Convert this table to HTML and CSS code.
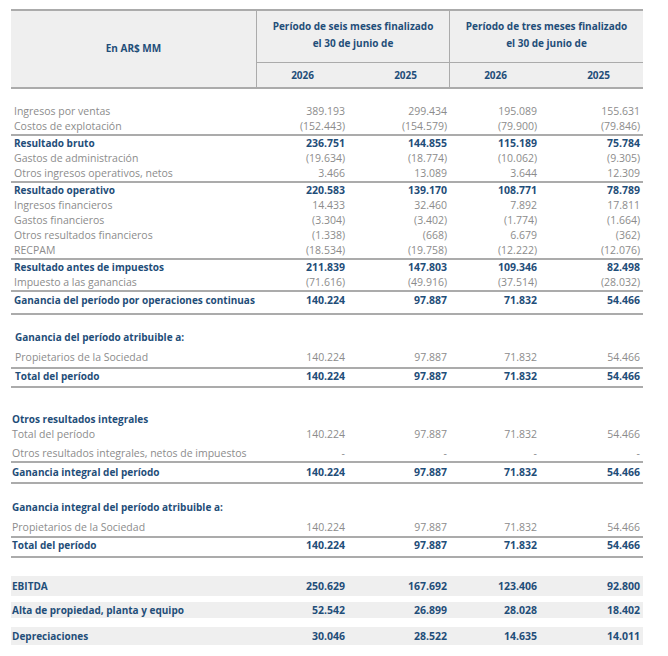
FILE: index.html
```html
<!DOCTYPE html>
<html lang="es">
<head>
<meta charset="utf-8">
<link rel="stylesheet" href="styles.css">
</head>
<body>
<div class="sheet">
  <div class="head">
    <div class="head-label">En AR$ MM</div>
    <div class="period p1">Período de seis meses finalizado<br>el 30 de junio de</div>
    <div class="period">Período de tres meses finalizado<br>el 30 de junio de</div>
    <div class="years p1"><span>2026</span><span>2025</span></div>
    <div class="years"><span>2026</span><span>2025</span></div>
  </div>

  <div class="sec s1">
    <div class="row"><span>Ingresos por ventas</span><span>389.193</span><span>299.434</span><span>195.089</span><span>155.631</span></div>
    <div class="row line"><span>Costos de explotación</span><span>(152.443)</span><span>(154.579)</span><span>(79.900)</span><span>(79.846)</span></div>
    <div class="row b"><span>Resultado bruto</span><span>236.751</span><span>144.855</span><span>115.189</span><span>75.784</span></div>
    <div class="row"><span>Gastos de administración</span><span>(19.634)</span><span>(18.774)</span><span>(10.062)</span><span>(9.305)</span></div>
    <div class="row line"><span>Otros ingresos operativos, netos</span><span>3.466</span><span>13.089</span><span>3.644</span><span>12.309</span></div>
    <div class="row b"><span>Resultado operativo</span><span>220.583</span><span>139.170</span><span>108.771</span><span>78.789</span></div>
    <div class="row"><span>Ingresos financieros</span><span>14.433</span><span>32.460</span><span>7.892</span><span>17.811</span></div>
    <div class="row"><span>Gastos financieros</span><span>(3.304)</span><span>(3.402)</span><span>(1.774)</span><span>(1.664)</span></div>
    <div class="row"><span>Otros resultados financieros</span><span>(1.338)</span><span>(668)</span><span>6.679</span><span>(362)</span></div>
    <div class="row line"><span>RECPAM</span><span>(18.534)</span><span>(19.758)</span><span>(12.222)</span><span>(12.076)</span></div>
    <div class="row b"><span>Resultado antes de impuestos</span><span>211.839</span><span>147.803</span><span>109.346</span><span>82.498</span></div>
    <div class="row line"><span>Impuesto a las ganancias</span><span>(71.616)</span><span>(49.916)</span><span>(37.514)</span><span>(28.032)</span></div>
    <div class="row b line gan"><span>Ganancia del período por operaciones continuas</span><span>140.224</span><span>97.887</span><span>71.832</span><span>54.466</span></div>
  </div>

  <div class="sec s2">
    <div class="title pb5">Ganancia del período atribuible a:</div>
    <div class="row line pb2"><span>Propietarios de la Sociedad</span><span>140.224</span><span>97.887</span><span>71.832</span><span>54.466</span></div>
    <div class="row b line pb2"><span>Total del período</span><span>140.224</span><span>97.887</span><span>71.832</span><span>54.466</span></div>
  </div>

  <div class="sec s3">
    <div class="title">Otros resultados integrales</div>
    <div class="row"><span>Total del período</span><span>140.224</span><span>97.887</span><span>71.832</span><span>54.466</span></div>
    <div class="row line pt4"><span>Otros resultados integrales, netos de impuestos</span><span>-</span><span>-</span><span>-</span><span>-</span></div>
    <div class="row b line pt2 pb2"><span>Ganancia integral del período</span><span>140.224</span><span>97.887</span><span>71.832</span><span>54.466</span></div>
  </div>

  <div class="sec s4">
    <div class="title">Ganancia integral del período atribuible a:</div>
    <div class="row line pt5 pb1"><span>Propietarios de la Sociedad</span><span>140.224</span><span>97.887</span><span>71.832</span><span>54.466</span></div>
    <div class="row b line pb3"><span>Total del período</span><span>140.224</span><span>97.887</span><span>71.832</span><span>54.466</span></div>
  </div>

  <div class="sec s5">
    <div class="row b band h20"><span>EBITDA</span><span>250.629</span><span>167.692</span><span>123.406</span><span>92.800</span></div>
    <div class="row b band h16 mt6"><span>Alta de propiedad, planta y equipo</span><span>52.542</span><span>26.899</span><span>28.028</span><span>18.402</span></div>
    <div class="row b band h18 mt9"><span>Depreciaciones</span><span>30.046</span><span>28.522</span><span>14.635</span><span>14.011</span></div>
  </div>
</div>
</body>
</html>
```

FILE: styles.css
```css
* { box-sizing: border-box; }

body {
  margin: 0;
  padding: 9px 0 0 11px;
  font-family: "Open Sans", "Noto Sans", sans-serif;
  font-size: 10.5px;
  color: #8c8c8c;
  background: #ffffff;
}

.sheet {
  width: 632px;
}

.head {
  display: grid;
  grid-template-columns: 246px 193px 193px;
  grid-template-rows: 52px 24px;
  background: #efefef;
  border-top: 2px solid #ababab;
  border-bottom: 2px solid #ababab;
  color: #1f4e79;
  font-weight: 700;
  font-size: 10px;
}

.head-label {
  grid-row: 1 / span 2;
  grid-column: 1;
  border-right: 1px solid #ababab;
  display: flex;
  align-items: center;
  justify-content: center;
  padding-bottom: 2px;
}

.period {
  display: flex;
  align-items: center;
  justify-content: center;
  text-align: center;
  line-height: 17px;
  padding-bottom: 3px;
  border-bottom: 1px solid #ababab;
}

.p1 {
  border-right: 1px solid #ababab;
}

.years {
  display: grid;
  grid-template-columns: 91px 102px;
  align-items: center;
  text-align: right;
  line-height: 23px;
}

.years span { padding-right: 33px; }
.years.p1 span:first-child { padding-right: 34px; }
.years:not(.p1) { grid-template-columns: 90px 103px; }

.s1 { margin-top: 15px; }
.s2 { margin-top: 15px; }
.s3 { margin-top: 24px; }
.s4 { margin-top: 16px; }
.s5 { margin-top: 18px; }

.row {
  display: grid;
  grid-template-columns: 246px 91px 102px 90px 103px;
  line-height: 15px;
  white-space: nowrap;
}

.row span {
  text-align: right;
  padding-right: 3px;
}

.row span:first-child {
  text-align: left;
  padding-left: 3px;
  padding-right: 0;
}

.s2 .row span:first-child,
.s2 .title { padding-left: 4px; }

.s3 .row span:first-child,
.s4 .row span:first-child,
.s5 .row span:first-child { padding-left: 1px; }

.title {
  line-height: 15px;
  font-weight: 700;
  font-size: 10px;
  color: #1f4e79;
  padding-left: 1px;
}

.b {
  font-weight: 700;
  color: #1f4e79;
}

.b span:first-child { font-size: 10px; }

.line {
  border-bottom: 2px solid #ababab;
}

.gan { padding-top: 1px; padding-bottom: 5px; }

.pb1 { padding-bottom: 1px; }
.pb2 { padding-bottom: 2px; }
.pb3 { padding-bottom: 3px; }
.pb5 { padding-bottom: 5px; }
.pt2 { padding-top: 2px; }
.pt4 { padding-top: 4px; }
.pt5 { padding-top: 5px; }

.band { background: #efefef; }
.h20 { line-height: 20px; }
.h16 { line-height: 16px; }
.h18 { line-height: 18px; }
.mt6 { margin-top: 6px; }
.mt9 { margin-top: 9px; }
```
